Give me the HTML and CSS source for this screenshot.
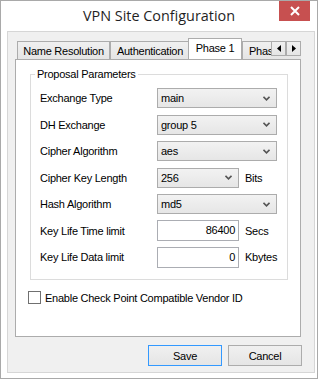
FILE: index.html
```html
<!DOCTYPE html>
<html>
<head>
<meta charset="utf-8">
<link rel="stylesheet" href="styles.css">
</head>
<body>
<div class="window">
  <div class="titlebar">
    <span class="title">VPN Site Configuration</span>
    <div class="close">
      <svg width="10" height="10" viewBox="0 0 10 10"><path d="M1 1L9 9M9 1L1 9" stroke="#fff" stroke-width="2" fill="none"/></svg>
    </div>
  </div>
  <div class="client">
    <div class="tabctl">
      <div class="tabstrip">
        <div class="tab t1">Name Resolution</div>
        <div class="tab t2">Authentication</div>
        <div class="tab active">Phase 1</div>
        <div class="tab t4">Phase 2</div>
        <div class="scroller">
          <div class="sbtn"><svg width="4" height="7" viewBox="0 0 4 7"><path d="M4 0V7L0 3.5Z" fill="#000"/></svg></div>
          <div class="sbtn"><svg width="4" height="7" viewBox="0 0 4 7"><path d="M0 0V7L4 3.5Z" fill="#000"/></svg></div>
        </div>
      </div>
      <div class="panel">
        <div class="group">
          <div class="legend">Proposal Parameters</div>
          <div class="rows">
            <div class="lbl">Exchange Type</div>
            <div class="combo wide"><span>main</span><svg class="chev" width="7" height="5" viewBox="0 0 7 5"><path d="M0.5 0.8L3.5 3.8L6.5 0.8" stroke="#555" stroke-width="1.6" fill="none"/></svg></div>
            <div class="lbl">DH Exchange</div>
            <div class="combo wide"><span>group 5</span><svg class="chev" width="7" height="5" viewBox="0 0 7 5"><path d="M0.5 0.8L3.5 3.8L6.5 0.8" stroke="#555" stroke-width="1.6" fill="none"/></svg></div>
            <div class="lbl">Cipher Algorithm</div>
            <div class="combo wide"><span>aes</span><svg class="chev" width="7" height="5" viewBox="0 0 7 5"><path d="M0.5 0.8L3.5 3.8L6.5 0.8" stroke="#555" stroke-width="1.6" fill="none"/></svg></div>
            <div class="lbl">Cipher Key Length</div>
            <div class="ctl-unit"><div class="combo narrow"><span>256</span><svg class="chev" width="7" height="5" viewBox="0 0 7 5"><path d="M0.5 0.8L3.5 3.8L6.5 0.8" stroke="#555" stroke-width="1.6" fill="none"/></svg></div><span class="unit">Bits</span></div>
            <div class="lbl">Hash Algorithm</div>
            <div class="combo wide"><span>md5</span><svg class="chev" width="7" height="5" viewBox="0 0 7 5"><path d="M0.5 0.8L3.5 3.8L6.5 0.8" stroke="#555" stroke-width="1.6" fill="none"/></svg></div>
            <div class="lbl">Key Life Time limit</div>
            <div class="ctl-unit"><div class="textbox">86400</div><span class="unit">Secs</span></div>
            <div class="lbl">Key Life Data limit</div>
            <div class="ctl-unit"><div class="textbox">0</div><span class="unit">Kbytes</span></div>
          </div>
        </div>
        <div class="check"><span class="box"></span><span>Enable Check Point Compatible Vendor ID</span></div>
      </div>
    </div>
    <div class="buttons">
      <div class="btn default">Save</div>
      <div class="btn">Cancel</div>
    </div>
  </div>
</div>
</body>
</html>
```
FILE: styles.css
```css
html, body {
  margin: 0;
  padding: 0;
  background: #fff;
}
body {
  font-family: "Liberation Sans", Arial, sans-serif;
  font-size: 11px;
  letter-spacing: -0.25px;
  color: #000;
}
.window {
  width: 318px;
  height: 379px;
  box-sizing: border-box;
  border: 1px solid #a9a9a9;
  background: #ffffff;
  display: flex;
  flex-direction: column;
}
.titlebar {
  height: 30px;
  position: relative;
  display: flex;
  justify-content: center;
  align-items: center;
}
.title {
  font-family: "Open Sans", "Noto Sans", sans-serif;
  font-size: 14.4px;
  letter-spacing: 0;
  color: #1f1f1f;
  margin-top: -2px;
}
.close {
  position: absolute;
  right: 7px;
  top: 0;
  width: 31px;
  height: 20px;
  background: #c75050;
  display: flex;
  align-items: center;
  justify-content: center;
}
.client {
  margin: 0 2px 5px 6px;
  flex: 1;
  background: #f0f0f0;
  border: 1px solid #d6d6d6;
  padding: 6px 0 0 7px;
  display: flex;
  flex-direction: column;
}
.tabctl {
  width: 286px;
}
.tabstrip {
  height: 21px;
  display: flex;
  align-items: flex-end;
  padding-left: 2px;
  position: relative;
  overflow: hidden;
}
.tab {
  box-sizing: border-box;
  height: 18px;
  border: 1px solid #acacac;
  border-bottom: none;
  background: linear-gradient(#f0f0f0, #e5e5e5);
  display: flex;
  align-items: center;
  justify-content: center;
  white-space: nowrap;
  flex: none;
}
.t1 { width: 93px; }
.t2 { width: 80px; }
.t4 { width: 60px; justify-content: flex-start; padding-left: 6px; }
.tab.active {
  width: 54px;
  height: 22px;
  margin-left: -2px;
  margin-bottom: -1px;
  background: #fff;
  position: relative;
  z-index: 2;
  padding-bottom: 3px;
}
.scroller {
  position: absolute;
  right: 0;
  top: 3px;
  display: flex;
  z-index: 3;
}
.sbtn {
  box-sizing: border-box;
  width: 15px;
  height: 15px;
  border: 1px solid #acacac;
  background: linear-gradient(#f0f0f0, #e5e5e5);
  display: flex;
  align-items: center;
  justify-content: center;
}
.panel {
  box-sizing: border-box;
  height: 278px;
  border: 1px solid #acacac;
  background: #fff;
  padding: 14px 12px 0 14px;
  position: relative;
  z-index: 1;
}
.group {
  position: relative;
  border: 1px solid #dcdcdc;
  height: 206px;
  box-sizing: border-box;
  padding: 13px 0 0 9px;
}
.legend {
  position: absolute;
  top: -8px;
  left: 4px;
  background: #fff;
  padding: 0 2px;
  line-height: 14px;
}
.rows {
  display: grid;
  grid-template-columns: 117px auto;
  grid-auto-rows: 20px;
  row-gap: 6.5px;
  align-items: center;
}
.lbl {
  line-height: 20px;
}
.combo {
  box-sizing: border-box;
  height: 20px;
  border: 1px solid #acacac;
  background: linear-gradient(#f2f2f2, #e6e6e6);
  display: flex;
  align-items: center;
  justify-content: space-between;
  padding: 0 6px 0 3px;
}
.wide { width: 120px; }
.narrow { width: 82px; }
.chev { display: block; }
.ctl-unit {
  display: flex;
  align-items: center;
}
.unit { margin-left: 6px; }
.textbox {
  box-sizing: border-box;
  width: 82px;
  height: 21px;
  border: 1px solid #abadb3;
  background: #fff;
  text-align: right;
  padding-right: 3px;
  line-height: 19px;
}
.check {
  display: flex;
  align-items: center;
  margin-top: 11px;
  margin-left: -2px;
}
.box {
  box-sizing: border-box;
  width: 13px;
  height: 13px;
  border: 1px solid #707070;
  background: #fff;
  margin-right: 4px;
}
.buttons {
  display: flex;
  justify-content: flex-end;
  gap: 6px;
  width: 287px;
  margin-top: 8px;
}
.btn {
  box-sizing: border-box;
  width: 74px;
  height: 21px;
  border: 1px solid #acacac;
  background: linear-gradient(#f0f0f0, #e5e5e5);
  display: flex;
  align-items: center;
  justify-content: center;
}
.btn.default { border-color: #3399ff; }
```
